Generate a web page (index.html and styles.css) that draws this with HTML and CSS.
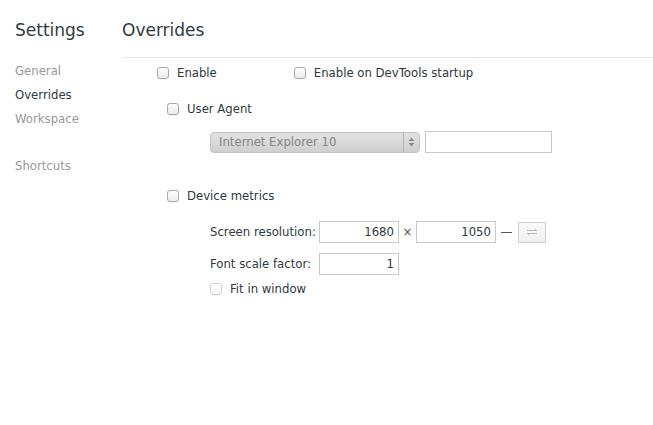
FILE: index.html
```html
<!DOCTYPE html>
<html>
<head>
<meta charset="utf-8">
<link rel="stylesheet" href="styles.css">
</head>
<body>
<div class="page">
  <aside class="sidebar">
    <h1 class="title">Settings</h1>
    <ul class="tabs">
      <li class="tab">General</li>
      <li class="tab active">Overrides</li>
      <li class="tab">Workspace</li>
      <li class="tab spaced">Shortcuts</li>
    </ul>
  </aside>
  <main class="content">
    <h2 class="title header">Overrides</h2>
    <div class="row row-enable">
      <label class="check"><span class="box"></span>Enable</label>
      <label class="check startup"><span class="box"></span>Enable on DevTools startup</label>
    </div>
    <div class="row row-ua">
      <label class="check"><span class="box"></span>User Agent</label>
    </div>
    <div class="row row-select">
      <div class="select">
        <span class="select-text">Internet Explorer 10</span>
        <span class="select-arrows">
          <svg width="7" height="10" viewBox="0 0 7 10"><path d="M3.5 0.5 L6.5 4 H0.5 Z M3.5 9.5 L6.5 6 H0.5 Z" fill="#8c8c8c"/></svg>
        </span>
      </div>
      <div class="input ua-input"></div>
    </div>
    <div class="row row-device">
      <label class="check"><span class="box"></span>Device metrics</label>
    </div>
    <div class="row row-res">
      <span class="label">Screen resolution:</span>
      <div class="input num">1680</div>
      <span class="times">×</span>
      <div class="input num">1050</div>
      <span class="dash"></span>
      <div class="swap">
        <svg width="12" height="8" viewBox="0 0 12 8"><path d="M1 2.5 H10.5 M8.5 0.8 L10.5 2.5 M11 5.5 H1.5 M3.5 7.2 L1.5 5.5" stroke="#b8b8b8" stroke-width="1" fill="none"/></svg>
      </div>
    </div>
    <div class="row row-font">
      <span class="label">Font scale factor:</span>
      <div class="input num">1</div>
    </div>
    <div class="row row-fit">
      <label class="check disabled"><span class="box"></span>Fit in window</label>
    </div>
  </main>
</div>
</body>
</html>
```
FILE: styles.css
```css
* { box-sizing: border-box; }
html, body { margin: 0; padding: 0; background: #fff; }
body {
  font-family: "DejaVu Sans", "Noto Sans", sans-serif;
  font-size: 11.7px;
  color: #303942;
  width: 653px;
  height: 425px;
  overflow: hidden;
}
.page { display: flex; }
.sidebar { width: 122px; padding-left: 15px; flex: none; }
.title {
  margin: 0;
  font-weight: normal;
  font-size: 17px;
  line-height: 20px;
  padding-top: 20px;
  height: 57px;
  color: #303942;
}
.tabs { list-style: none; margin: 0; padding: 0; padding-top: 6px; }
.tab { height: 24px; line-height: 16px; color: #999; }
.tab.active { color: #303942; }
.tab.spaced { margin-top: 23px; }
.content { flex: 1; }
.header { border-bottom: 1px solid #e8e8e8; height: 58px; }
.row { display: flex; align-items: center; }
.check { display: flex; align-items: center; white-space: nowrap; }
.box {
  width: 12px; height: 12px;
  border: 1px solid #a9a9a9;
  border-radius: 3px;
  background: linear-gradient(#fdfdfd, #ececec);
  margin-right: 8px;
  box-shadow: 0 1px 0 rgba(0,0,0,0.04);
}
.check.disabled .box { border-color: #d4d4d4; background: linear-gradient(#fff, #f5f5f5); }
.row-enable { height: 28px; margin-top: 1px; padding-left: 35px; }
.startup { margin-left: 77px; }
.row-ua { height: 20px; margin-top: 12px; padding-left: 45px; }
.row-select { height: 22px; margin-top: 12px; padding-left: 88px; }
.select {
  width: 210px; height: 21px;
  border: 1px solid #c2c2c2;
  border-radius: 4px;
  background: linear-gradient(#e2e2e2, #cfcfcf);
  display: flex; align-items: center;
  color: #858585;
}
.select-text { flex: 1; padding-left: 8px; }
.select-arrows {
  width: 16px; height: 100%;
  border-left: 1px solid #b3b3b3;
  display: flex; align-items: center; justify-content: center;
}
.input {
  height: 22px;
  border: 1px solid #c9c9c9;
  background: #fff;
  display: flex; align-items: center; justify-content: flex-end;
  padding-right: 4px;
  color: #303942;
}
.ua-input { width: 127px; margin-left: 5px; }
.row-device { height: 20px; margin-top: 33px; padding-left: 45px; }
.row-res { height: 22px; margin-top: 15px; padding-left: 88px; }
.label { width: 109px; }
.num { width: 80px; }
.times { width: 17px; text-align: center; color: #555; }
.dash { width: 11px; height: 1px; background: #555; margin: 0 6px 0 5px; }
.swap {
  width: 28px; height: 21px;
  border: 1px solid #cfcfcf;
  background: linear-gradient(#f9f9f9, #f0f0f0);
  display: flex; align-items: center; justify-content: center;
}
.row-font { height: 22px; margin-top: 10px; padding-left: 88px; }
.row-fit { height: 16px; margin-top: 6px; padding-left: 88px; }
```
